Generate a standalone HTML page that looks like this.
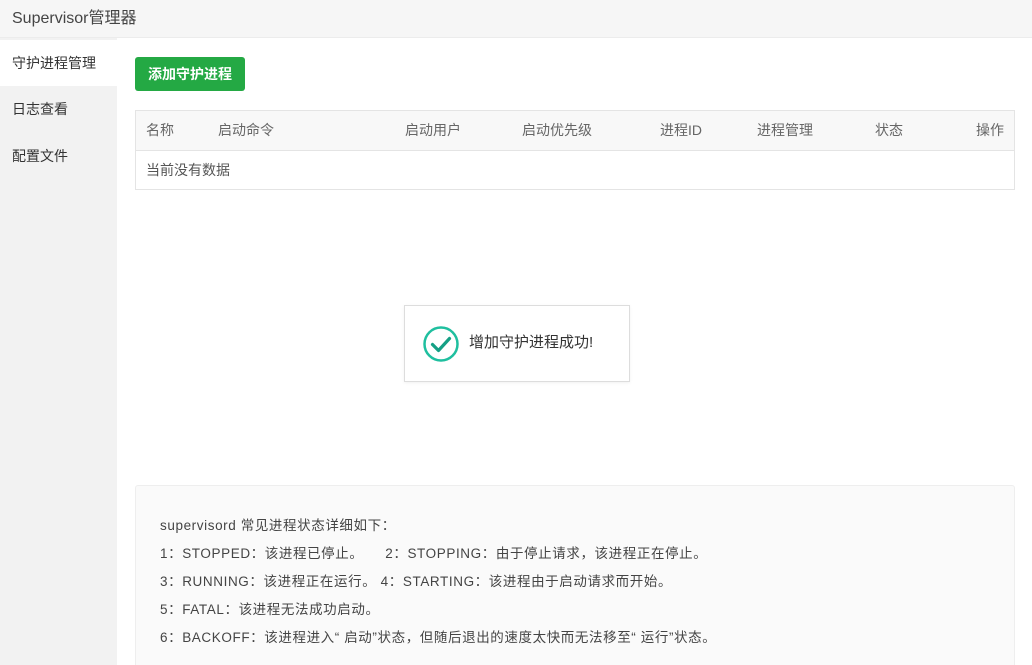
<!DOCTYPE html>
<html><head><meta charset="utf-8"><style>
*{margin:0;padding:0;box-sizing:border-box}
html,body{width:1032px;height:665px;overflow:hidden}
body{background:#fff;font-family:"Liberation Sans","Noto Sans CJK SC",sans-serif;color:#333;position:relative}
.hdr{position:absolute;left:0;top:0;width:1032px;height:38px;background:#f6f6f6;border-bottom:1px solid #ececec;font-size:16px;line-height:38px;padding-left:12px;color:#444}
.side{position:absolute;left:0;top:38px;width:117px;height:627px;background:#f2f2f2}
.side div{position:absolute;left:0;width:117px;height:46px;line-height:46px;padding-left:12px;font-size:14px;color:#333}
.btn{position:absolute;left:135px;top:57px;width:110px;height:34px;background:#24a944;border-radius:3px;color:#fff;font-size:14px;font-weight:bold;line-height:34px;text-align:center}
.tbl{position:absolute;left:135px;top:110px;width:880px;height:80px;border:1px solid #e4e4e4}
.th{height:40px;background:#f8f8f8;border-bottom:1px solid #e4e4e4;position:relative}
.th span{position:absolute;top:0;line-height:39px;font-size:14px;color:#666}
.td{line-height:38px;font-size:14px;color:#555;padding-left:10px}
.toast{position:absolute;left:404px;top:305px;width:226px;height:77px;border:1px solid #ddd;background:#fff;box-shadow:0 1px 3px rgba(0,0,0,.06)}
.toast svg{position:absolute;left:17px;top:19px}
.toast span{position:absolute;left:64px;top:27px;font-size:15px;color:#333;line-height:20px}
.info{position:absolute;left:135px;top:485px;width:880px;height:190px;background:#fafafa;border:1px solid #eee;border-radius:3px;padding:26px 0 0 24px;font-size:13.5px;letter-spacing:0.6px;color:#444}
.info p{line-height:28px;height:28px;white-space:nowrap}
</style></head><body>
<div class="hdr">Supervisor管理器</div>
<div class="side">
<div style="top:2px;background:#fff">守护进程管理</div>
<div style="top:48px">日志查看</div>
<div style="top:95px">配置文件</div>
</div>
<div class="btn">添加守护进程</div>
<div class="tbl">
<div class="th">
<span style="left:10px">名称</span><span style="left:82px">启动命令</span><span style="left:269px">启动用户</span><span style="left:386px">启动优先级</span><span style="left:524px">进程ID</span><span style="left:621px">进程管理</span><span style="left:739px">状态</span><span style="right:10px">操作</span>
</div>
<div class="td">当前没有数据</div>
</div>
<div class="toast">
<svg width="38" height="38" viewBox="0 0 38 38"><circle cx="19" cy="19" r="16.5" fill="none" stroke="#1fbf9f" stroke-width="2.5"/><path d="M10.5 19.5 L16.5 25.5 L27.5 13.5" fill="none" stroke="#15a085" stroke-width="3.2" stroke-linecap="round" stroke-linejoin="round"/></svg>
<span>增加守护进程成功!</span>
</div>
<div class="info">
<p>supervisord 常见进程状态详细如下：</p>
<p>1：STOPPED：该进程已停止。&nbsp;&nbsp;&nbsp;&nbsp;&nbsp;2：STOPPING：由于停止请求，该进程正在停止。</p>
<p>3：RUNNING：该进程正在运行。 4：STARTING：该进程由于启动请求而开始。</p>
<p>5：FATAL：该进程无法成功启动。</p>
<p>6：BACKOFF：该进程进入“ 启动”状态，但随后退出的速度太快而无法移至“ 运行”状态。</p>
</div>
</body></html>
